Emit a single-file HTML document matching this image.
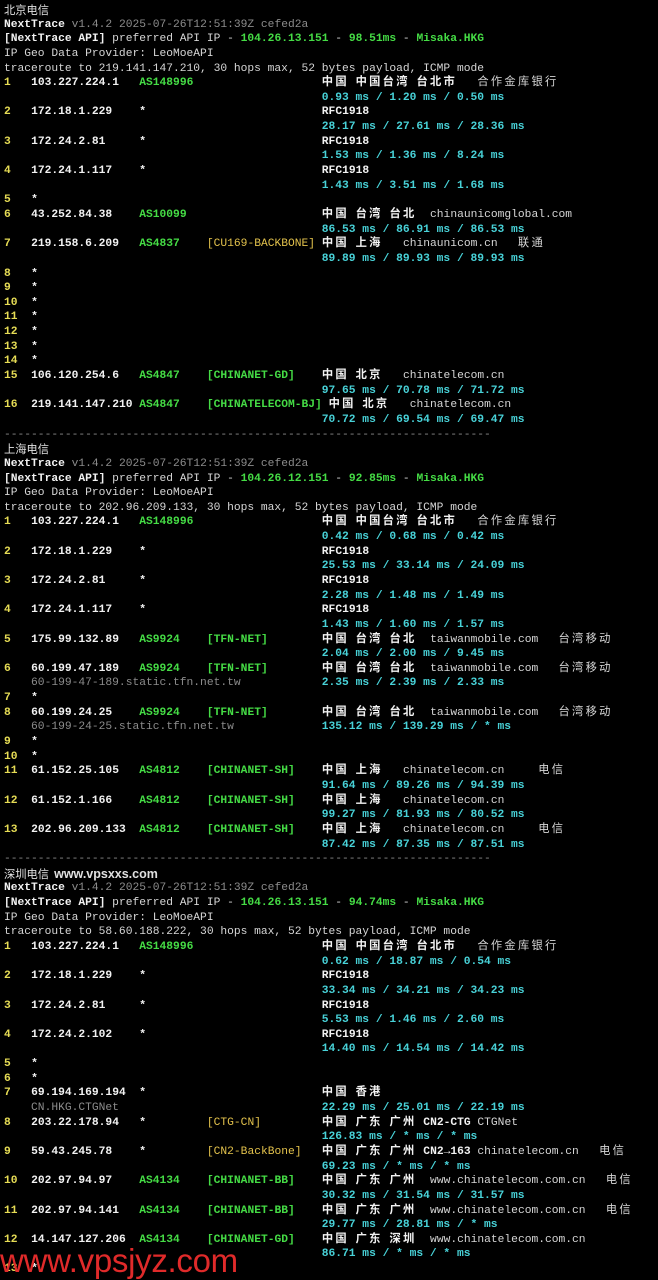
<!DOCTYPE html>
<html><head><meta charset="utf-8"><style>
body{margin:0;background:#000;width:658px;height:1280px;overflow:hidden;position:relative}
#t{position:absolute;left:4px;top:3px;font-family:"Liberation Mono","Noto Sans CJK SC",monospace;font-size:11.28px;color:#d6d6d6}
.l{height:14.65px;line-height:14.65px;white-space:pre;overflow:visible}
i{font-style:normal;font-family:"Noto Sans CJK SC",sans-serif;letter-spacing:2.26px;line-height:0}
.y{color:#e6dc55;font-weight:bold}.w{color:#f2f2f2;font-weight:bold}.g{color:#45dc45;font-weight:bold}
.c{color:#48d2d8;font-weight:bold}.gr{color:#8c8c8c}.k{color:#e3c24c}.h{color:#e0e0e0;font-family:"Noto Sans CJK SC",sans-serif}
#wm{position:absolute;left:0;top:1242px;font-family:"Liberation Sans",sans-serif;font-size:33px;color:#e02a2a;letter-spacing:-0.3px}
</style></head><body><div id="t">
<div class="l h">北京电信</div>
<div class="l"><span class="w">NextTrace</span> <span class="gr">v1.4.2 2025-07-26T12:51:39Z cefed2a</span></div>
<div class="l"><span class="w">[NextTrace API]</span> preferred API IP - <span class="g">104.26.13.151</span> - <span class="g">98.51ms</span> - <span class="g">Misaka.HKG</span></div>
<div class="l">IP Geo Data Provider: LeoMoeAPI</div>
<div class="l">traceroute to 219.141.147.210, 30 hops max, 52 bytes payload, ICMP mode</div>
<div class="l"><span class="y">1</span>   <span class="w">103.227.224.1</span>   <span class="g">AS148996</span>                   <span class="w"><i>中国</i> <i>中国台湾</i> <i>台北市</i></span>   <i>合作金库银行</i></div>
<div class="l c">                                               0.93 ms / 1.20 ms / 0.50 ms</div>
<div class="l"><span class="y">2</span>   <span class="w">172.18.1.229</span>    <span class="w">*</span>                          <span class="w">RFC1918</span></div>
<div class="l c">                                               28.17 ms / 27.61 ms / 28.36 ms</div>
<div class="l"><span class="y">3</span>   <span class="w">172.24.2.81</span>     <span class="w">*</span>                          <span class="w">RFC1918</span></div>
<div class="l c">                                               1.53 ms / 1.36 ms / 8.24 ms</div>
<div class="l"><span class="y">4</span>   <span class="w">172.24.1.117</span>    <span class="w">*</span>                          <span class="w">RFC1918</span></div>
<div class="l c">                                               1.43 ms / 3.51 ms / 1.68 ms</div>
<div class="l"><span class="y">5</span>   <span class="w">*</span></div>
<div class="l"><span class="y">6</span>   <span class="w">43.252.84.38</span>    <span class="g">AS10099</span>                    <span class="w"><i>中国</i> <i>台湾</i> <i>台北</i></span>  chinaunicomglobal.com</div>
<div class="l c">                                               86.53 ms / 86.91 ms / 86.53 ms</div>
<div class="l"><span class="y">7</span>   <span class="w">219.158.6.209</span>   <span class="g">AS4837</span>    <span class="k">[CU169-BACKBONE]</span> <span class="w"><i>中国</i> <i>上海</i></span>   chinaunicom.cn   <i>联通</i></div>
<div class="l c">                                               89.89 ms / 89.93 ms / 89.93 ms</div>
<div class="l"><span class="y">8</span>   <span class="w">*</span></div>
<div class="l"><span class="y">9</span>   <span class="w">*</span></div>
<div class="l"><span class="y">10</span>  <span class="w">*</span></div>
<div class="l"><span class="y">11</span>  <span class="w">*</span></div>
<div class="l"><span class="y">12</span>  <span class="w">*</span></div>
<div class="l"><span class="y">13</span>  <span class="w">*</span></div>
<div class="l"><span class="y">14</span>  <span class="w">*</span></div>
<div class="l"><span class="y">15</span>  <span class="w">106.120.254.6</span>   <span class="g">AS4847</span>    <span class="g">[CHINANET-GD]</span>    <span class="w"><i>中国</i> <i>北京</i></span>   chinatelecom.cn</div>
<div class="l c">                                               97.65 ms / 70.78 ms / 71.72 ms</div>
<div class="l"><span class="y">16</span>  <span class="w">219.141.147.210</span> <span class="g">AS4847</span>    <span class="g">[CHINATELECOM-BJ]</span> <span class="w"><i>中国</i> <i>北京</i></span>   chinatelecom.cn</div>
<div class="l c">                                               70.72 ms / 69.54 ms / 69.47 ms</div>
<div class="l gr">------------------------------------------------------------------------</div>
<div class="l h">上海电信</div>
<div class="l"><span class="w">NextTrace</span> <span class="gr">v1.4.2 2025-07-26T12:51:39Z cefed2a</span></div>
<div class="l"><span class="w">[NextTrace API]</span> preferred API IP - <span class="g">104.26.12.151</span> - <span class="g">92.85ms</span> - <span class="g">Misaka.HKG</span></div>
<div class="l">IP Geo Data Provider: LeoMoeAPI</div>
<div class="l">traceroute to 202.96.209.133, 30 hops max, 52 bytes payload, ICMP mode</div>
<div class="l"><span class="y">1</span>   <span class="w">103.227.224.1</span>   <span class="g">AS148996</span>                   <span class="w"><i>中国</i> <i>中国台湾</i> <i>台北市</i></span>   <i>合作金库银行</i></div>
<div class="l c">                                               0.42 ms / 0.68 ms / 0.42 ms</div>
<div class="l"><span class="y">2</span>   <span class="w">172.18.1.229</span>    <span class="w">*</span>                          <span class="w">RFC1918</span></div>
<div class="l c">                                               25.53 ms / 33.14 ms / 24.09 ms</div>
<div class="l"><span class="y">3</span>   <span class="w">172.24.2.81</span>     <span class="w">*</span>                          <span class="w">RFC1918</span></div>
<div class="l c">                                               2.28 ms / 1.48 ms / 1.49 ms</div>
<div class="l"><span class="y">4</span>   <span class="w">172.24.1.117</span>    <span class="w">*</span>                          <span class="w">RFC1918</span></div>
<div class="l c">                                               1.43 ms / 1.60 ms / 1.57 ms</div>
<div class="l"><span class="y">5</span>   <span class="w">175.99.132.89</span>   <span class="g">AS9924</span>    <span class="g">[TFN-NET]</span>        <span class="w"><i>中国</i> <i>台湾</i> <i>台北</i></span>  taiwanmobile.com   <i>台湾移动</i></div>
<div class="l c">                                               2.04 ms / 2.00 ms / 9.45 ms</div>
<div class="l"><span class="y">6</span>   <span class="w">60.199.47.189</span>   <span class="g">AS9924</span>    <span class="g">[TFN-NET]</span>        <span class="w"><i>中国</i> <i>台湾</i> <i>台北</i></span>  taiwanmobile.com   <i>台湾移动</i></div>
<div class="l">    <span class="gr">60-199-47-189.static.tfn.net.tw</span>            <span class="c">2.35 ms / 2.39 ms / 2.33 ms</span></div>
<div class="l"><span class="y">7</span>   <span class="w">*</span></div>
<div class="l"><span class="y">8</span>   <span class="w">60.199.24.25</span>    <span class="g">AS9924</span>    <span class="g">[TFN-NET]</span>        <span class="w"><i>中国</i> <i>台湾</i> <i>台北</i></span>  taiwanmobile.com   <i>台湾移动</i></div>
<div class="l">    <span class="gr">60-199-24-25.static.tfn.net.tw</span>             <span class="c">135.12 ms / 139.29 ms / * ms</span></div>
<div class="l"><span class="y">9</span>   <span class="w">*</span></div>
<div class="l"><span class="y">10</span>  <span class="w">*</span></div>
<div class="l"><span class="y">11</span>  <span class="w">61.152.25.105</span>   <span class="g">AS4812</span>    <span class="g">[CHINANET-SH]</span>    <span class="w"><i>中国</i> <i>上海</i></span>   chinatelecom.cn     <i>电信</i></div>
<div class="l c">                                               91.64 ms / 89.26 ms / 94.39 ms</div>
<div class="l"><span class="y">12</span>  <span class="w">61.152.1.166</span>    <span class="g">AS4812</span>    <span class="g">[CHINANET-SH]</span>    <span class="w"><i>中国</i> <i>上海</i></span>   chinatelecom.cn</div>
<div class="l c">                                               99.27 ms / 81.93 ms / 80.52 ms</div>
<div class="l"><span class="y">13</span>  <span class="w">202.96.209.133</span>  <span class="g">AS4812</span>    <span class="g">[CHINANET-SH]</span>    <span class="w"><i>中国</i> <i>上海</i></span>   chinatelecom.cn     <i>电信</i></div>
<div class="l c">                                               87.42 ms / 87.35 ms / 87.51 ms</div>
<div class="l gr">------------------------------------------------------------------------</div>
<div class="l h">深圳电信  <b style="font-family:'Liberation Sans',sans-serif;font-size:12.5px">www.vpsxxs.com</b></div>
<div class="l"><span class="w">NextTrace</span> <span class="gr">v1.4.2 2025-07-26T12:51:39Z cefed2a</span></div>
<div class="l"><span class="w">[NextTrace API]</span> preferred API IP - <span class="g">104.26.13.151</span> - <span class="g">94.74ms</span> - <span class="g">Misaka.HKG</span></div>
<div class="l">IP Geo Data Provider: LeoMoeAPI</div>
<div class="l">traceroute to 58.60.188.222, 30 hops max, 52 bytes payload, ICMP mode</div>
<div class="l"><span class="y">1</span>   <span class="w">103.227.224.1</span>   <span class="g">AS148996</span>                   <span class="w"><i>中国</i> <i>中国台湾</i> <i>台北市</i></span>   <i>合作金库银行</i></div>
<div class="l c">                                               0.62 ms / 18.87 ms / 0.54 ms</div>
<div class="l"><span class="y">2</span>   <span class="w">172.18.1.229</span>    <span class="w">*</span>                          <span class="w">RFC1918</span></div>
<div class="l c">                                               33.34 ms / 34.21 ms / 34.23 ms</div>
<div class="l"><span class="y">3</span>   <span class="w">172.24.2.81</span>     <span class="w">*</span>                          <span class="w">RFC1918</span></div>
<div class="l c">                                               5.53 ms / 1.46 ms / 2.60 ms</div>
<div class="l"><span class="y">4</span>   <span class="w">172.24.2.102</span>    <span class="w">*</span>                          <span class="w">RFC1918</span></div>
<div class="l c">                                               14.40 ms / 14.54 ms / 14.42 ms</div>
<div class="l"><span class="y">5</span>   <span class="w">*</span></div>
<div class="l"><span class="y">6</span>   <span class="w">*</span></div>
<div class="l"><span class="y">7</span>   <span class="w">69.194.169.194</span>  <span class="w">*</span>                          <span class="w"><i>中国</i> <i>香港</i></span></div>
<div class="l">    <span class="gr">CN.HKG.CTGNet</span>                              <span class="c">22.29 ms / 25.01 ms / 22.19 ms</span></div>
<div class="l"><span class="y">8</span>   <span class="w">203.22.178.94</span>   <span class="w">*</span>         <span class="k">[CTG-CN]</span>         <span class="w"><i>中国</i> <i>广东</i> <i>广州</i> CN2-CTG</span> CTGNet</div>
<div class="l c">                                               126.83 ms / * ms / * ms</div>
<div class="l"><span class="y">9</span>   <span class="w">59.43.245.78</span>    <span class="w">*</span>         <span class="k">[CN2-BackBone]</span>   <span class="w"><i>中国</i> <i>广东</i> <i>广州</i> CN2→163</span> chinatelecom.cn   <i>电信</i></div>
<div class="l c">                                               69.23 ms / * ms / * ms</div>
<div class="l"><span class="y">10</span>  <span class="w">202.97.94.97</span>    <span class="g">AS4134</span>    <span class="g">[CHINANET-BB]</span>    <span class="w"><i>中国</i> <i>广东</i> <i>广州</i></span>  www.chinatelecom.com.cn   <i>电信</i></div>
<div class="l c">                                               30.32 ms / 31.54 ms / 31.57 ms</div>
<div class="l"><span class="y">11</span>  <span class="w">202.97.94.141</span>   <span class="g">AS4134</span>    <span class="g">[CHINANET-BB]</span>    <span class="w"><i>中国</i> <i>广东</i> <i>广州</i></span>  www.chinatelecom.com.cn   <i>电信</i></div>
<div class="l c">                                               29.77 ms / 28.81 ms / * ms</div>
<div class="l"><span class="y">12</span>  <span class="w">14.147.127.206</span>  <span class="g">AS4134</span>    <span class="g">[CHINANET-GD]</span>    <span class="w"><i>中国</i> <i>广东</i> <i>深圳</i></span>  www.chinatelecom.com.cn</div>
<div class="l c">                                               86.71 ms / * ms / * ms</div>
<div class="l"><span class="y">13</span>  <span class="w">*</span></div>
</div>
<div id="wm">www.vpsjyz.com</div>
</body></html>
